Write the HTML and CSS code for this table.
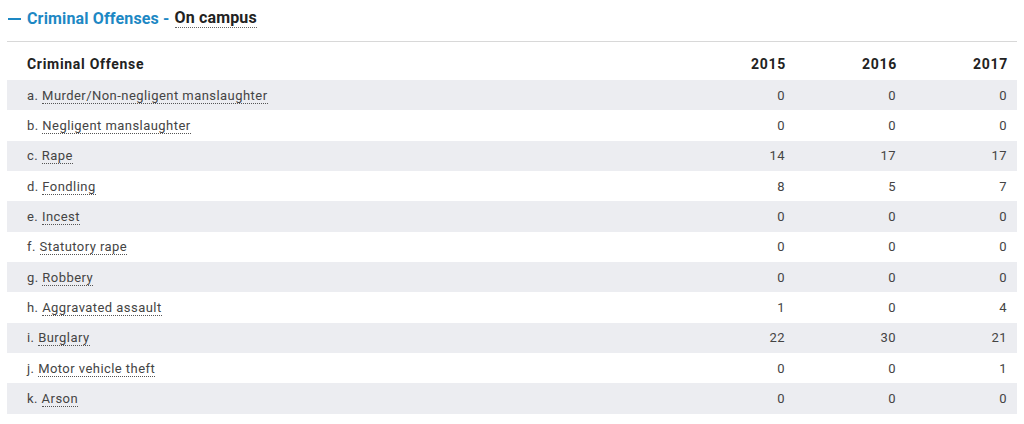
FILE: index.html
```html
<!DOCTYPE html>
<html lang="en">
<head>
  <meta charset="UTF-8">
  <title>Criminal Offenses</title>
  <link rel="stylesheet" href="styles.css">
</head>
<body>

  <div class="section">
    <h2 class="section-title">
      <span class="toggle"></span>
      <span class="title-main">Criminal Offenses -</span>
      <span class="title-sub">On campus</span>
    </h2>

    <table class="stats">
      <thead>
        <tr>
          <th class="name">Criminal Offense</th>
          <th>2015</th>
          <th>2016</th>
          <th>2017</th>
        </tr>
      </thead>
      <tbody>
        <tr><td class="name">a. <abbr>Murder/Non-negligent manslaughter</abbr></td><td>0</td><td>0</td><td>0</td></tr>
        <tr><td class="name">b. <abbr>Negligent manslaughter</abbr></td><td>0</td><td>0</td><td>0</td></tr>
        <tr><td class="name">c. <abbr>Rape</abbr></td><td>14</td><td>17</td><td>17</td></tr>
        <tr><td class="name">d. <abbr>Fondling</abbr></td><td>8</td><td>5</td><td>7</td></tr>
        <tr><td class="name">e. <abbr>Incest</abbr></td><td>0</td><td>0</td><td>0</td></tr>
        <tr><td class="name">f. <abbr>Statutory rape</abbr></td><td>0</td><td>0</td><td>0</td></tr>
        <tr><td class="name">g. <abbr>Robbery</abbr></td><td>0</td><td>0</td><td>0</td></tr>
        <tr><td class="name">h. <abbr>Aggravated assault</abbr></td><td>1</td><td>0</td><td>4</td></tr>
        <tr><td class="name">i. <abbr>Burglary</abbr></td><td>22</td><td>30</td><td>21</td></tr>
        <tr><td class="name">j. <abbr>Motor vehicle theft</abbr></td><td>0</td><td>0</td><td>1</td></tr>
        <tr><td class="name">k. <abbr>Arson</abbr></td><td>0</td><td>0</td><td>0</td></tr>
      </tbody>
    </table>
  </div>

</body>
</html>
```

FILE: styles.css
```css
* {
  margin: 0;
  padding: 0;
  box-sizing: border-box;
}
body {
  font-family: Roboto, "Liberation Sans", Arial, sans-serif;
  background: #fff;
  color: #333;
  padding: 0 7px;
}
.section-title {
  display: flex;
  align-items: center;
  gap: 5px;
  font-size: 16px;
  font-weight: bold;
  letter-spacing: 0.15px;
  height: 42px;
  padding: 0 0 4px 1px;
  border-bottom: 1px solid #d8d8d8;
}
.toggle {
  display: inline-block;
  width: 13px;
  height: 2px;
  background: #1d88c4;
  margin-right: 1px;
}
.title-main {
  color: #1d88c4;
}
.title-sub {
  color: #222;
  border-bottom: 1px dotted #666;
  line-height: 18px;
}
.stats {
  width: 100%;
  border-collapse: collapse;
  font-size: 13px;
  letter-spacing: 0.45px;
  margin-top: 6px;
}
.stats th {
  font-size: 14px;
  font-weight: bold;
  letter-spacing: 0.7px;
  color: #222;
  text-align: right;
  height: 32px;
  padding: 0 9px 0 20px;
  width: 111px;
}
.stats th.name,
.stats td.name {
  text-align: left;
  width: auto;
}
.stats td {
  text-align: right;
  height: 30.33px;
  padding: 0 10px 0 20px;
  color: #444;
}
.stats tbody tr:nth-child(odd) {
  background: #ecedf1;
}
abbr {
  text-decoration: none;
  border-bottom: 1px dotted #555;
}
```
